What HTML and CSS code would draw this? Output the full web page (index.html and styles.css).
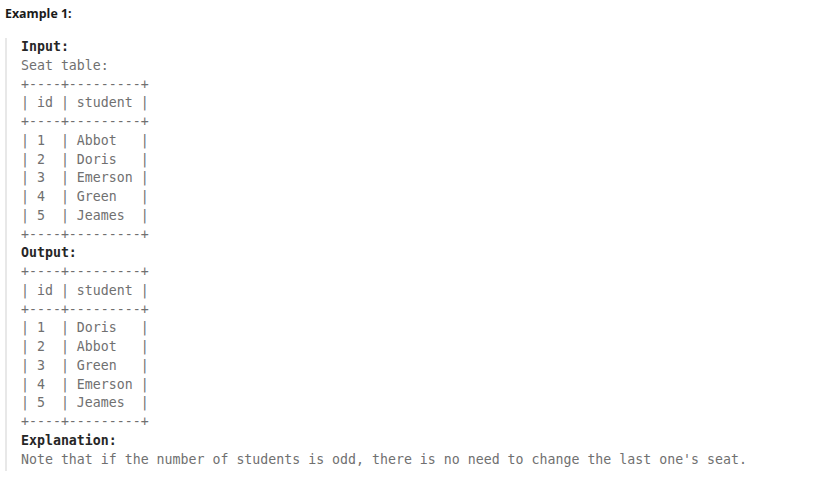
FILE: index.html
```html
<!DOCTYPE html>
<html>
<head>
<meta charset="utf-8">
<link rel="stylesheet" href="styles.css">
</head>
<body>
<div class="page">
<p class="title">Example 1:</p>
<pre class="example"><strong>Input:</strong>
Seat table:
+----+---------+
| id | student |
+----+---------+
| 1  | Abbot   |
| 2  | Doris   |
| 3  | Emerson |
| 4  | Green   |
| 5  | Jeames  |
+----+---------+
<strong>Output:</strong>
+----+---------+
| id | student |
+----+---------+
| 1  | Doris   |
| 2  | Abbot   |
| 3  | Green   |
| 4  | Emerson |
| 5  | Jeames  |
+----+---------+
<strong>Explanation:</strong>
Note that if the number of students is odd, there is no need to change the last one's seat.</pre>
</div>
</body>
</html>
```
FILE: styles.css
```css
html, body {
  margin: 0;
  padding: 0;
  background: #ffffff;
}
.page {
  padding: 5px 0 0 5px;
}
.title {
  margin: 0 0 15px 0;
  font-family: "Open Sans", "Liberation Sans", sans-serif;
  font-weight: 700;
  font-size: 12.4px;
  line-height: 18px;
  color: #1a1a1a;
}
.example {
  margin: 0;
  padding: 0 0 2px 14px;
  border-left: 2px solid #e8e8e8;
  font-family: "DejaVu Sans Mono", monospace;
  font-size: 13.25px;
  line-height: 18.75px;
  color: #707070;
  white-space: pre;
}
.example strong {
  font-weight: 700;
  color: #262626;
}
```
